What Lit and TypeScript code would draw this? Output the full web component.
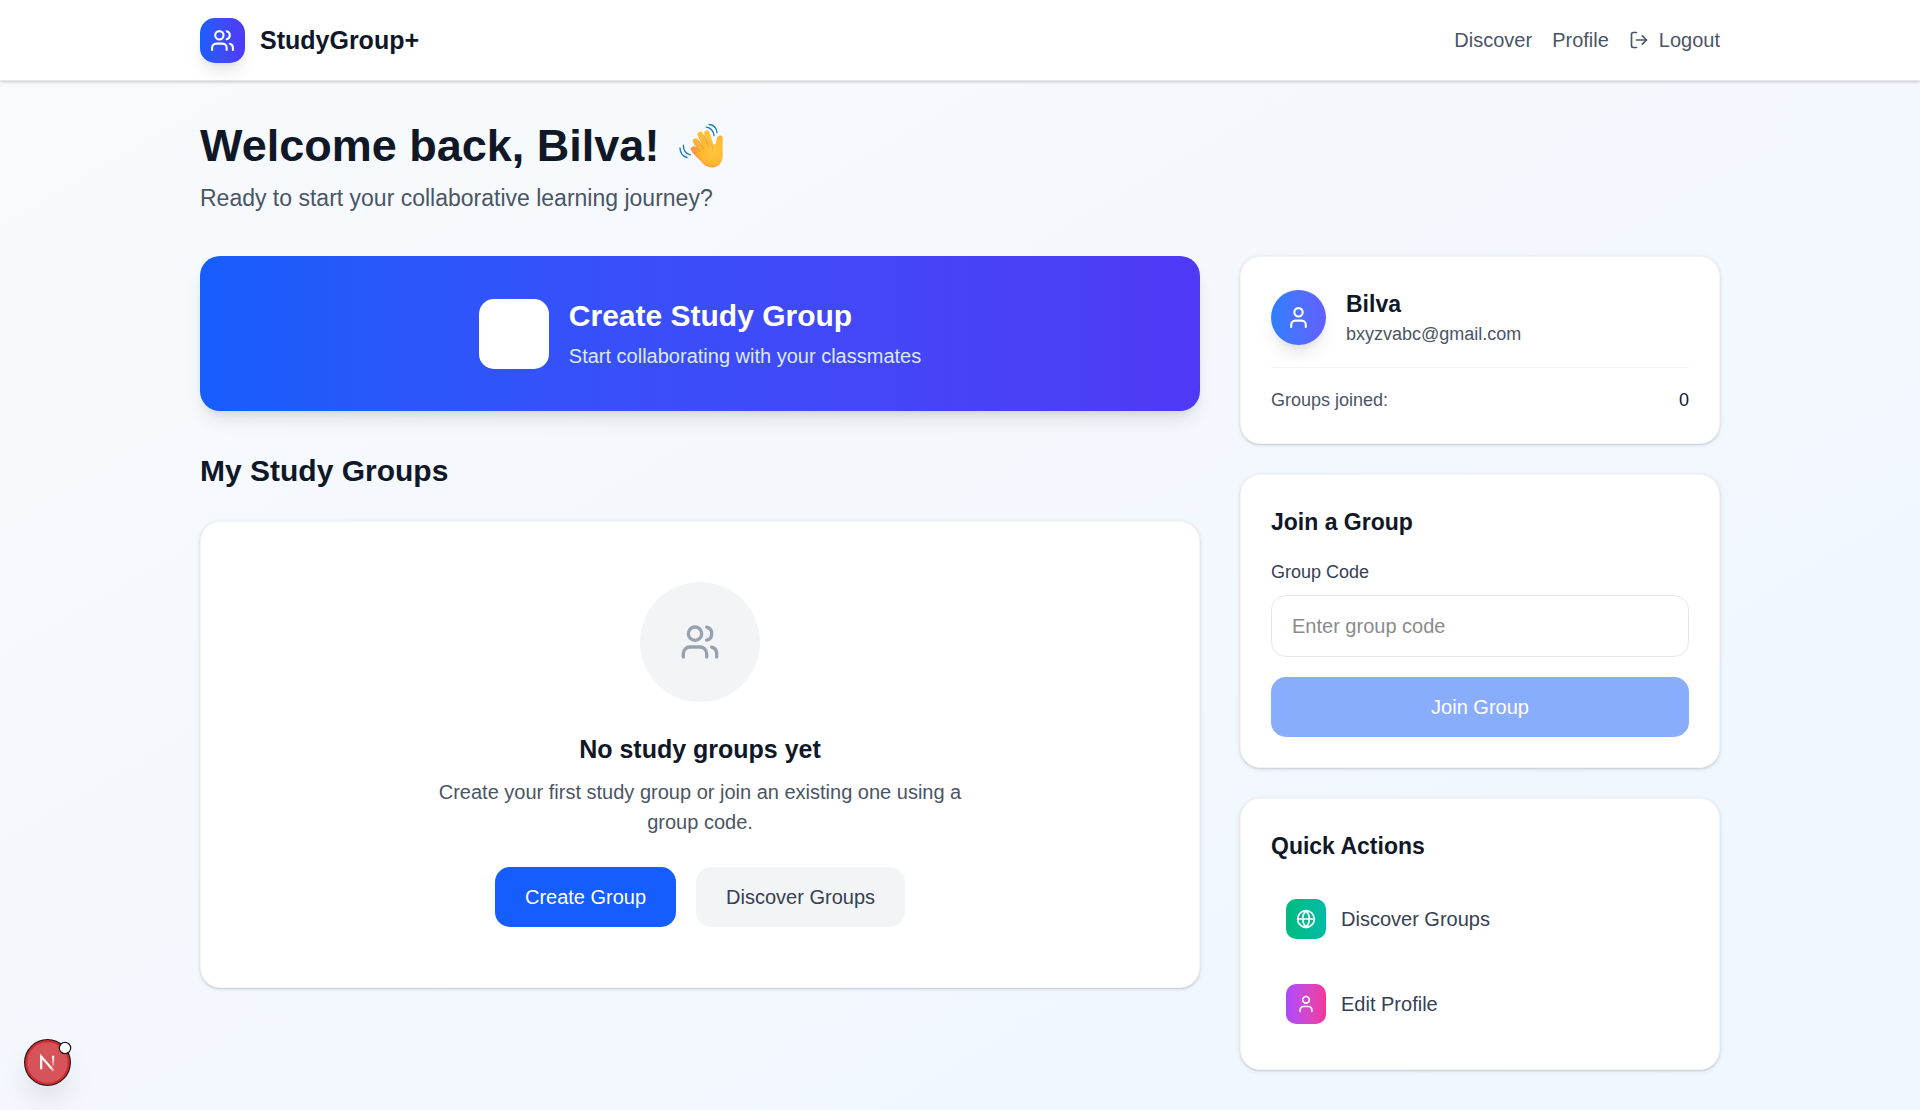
import { LitElement, html, css, svg, nothing } from "lit";
import { customElement, property, state } from "lit/decorators.js";

const ICONS = {
  users: svg`
    <path d="M16 21v-2a4 4 0 0 0-4-4H6a4 4 0 0 0-4 4v2"></path>
    <circle cx="9" cy="7" r="4"></circle>
    <path d="M22 21v-2a4 4 0 0 0-3-3.87"></path>
    <path d="M16 3.13a4 4 0 0 1 0 7.75"></path>`,
  user: svg`
    <path d="M19 21v-2a4 4 0 0 0-4-4H9a4 4 0 0 0-4 4v2"></path>
    <circle cx="12" cy="7" r="4"></circle>`,
  globe: svg`
    <circle cx="12" cy="12" r="10"></circle>
    <path d="M12 2a14.5 14.5 0 0 0 0 20 14.5 14.5 0 0 0 0-20"></path>
    <path d="M2 12h20"></path>`,
  logout: svg`
    <path d="M9 21H5a2 2 0 0 1-2-2V5a2 2 0 0 1 2-2h4"></path>
    <path d="m16 17 5-5-5-5"></path>
    <path d="M21 12H9"></path>`,
};

type IconName = keyof typeof ICONS;

@customElement("line-icon")
export class LineIcon extends LitElement {
  @property() name: IconName = "user";

  static styles = css`
    :host {
      display: inline-flex;
      width: 20px;
      height: 20px;
      flex: none;
    }
    svg {
      width: 100%;
      height: 100%;
      fill: none;
      stroke: currentColor;
      stroke-width: 2;
      stroke-linecap: round;
      stroke-linejoin: round;
    }
  `;

  render() {
    return html`<svg viewBox="0 0 24 24" aria-hidden="true">${ICONS[this.name] ?? nothing}</svg>`;
  }
}

@customElement("waving-hand")
export class WavingHand extends LitElement {
  static styles = css`
    :host {
      display: inline-flex;
      width: 44px;
      height: 45px;
    }
    svg {
      width: 100%;
      height: 100%;
    }
  `;

  render() {
    return html`
      <svg viewBox="57 40 132 134" role="img" aria-label="Waving hand">
        <defs>
          <linearGradient id="skin" gradientUnits="userSpaceOnUse" x1="150" y1="65" x2="96" y2="125">
            <stop offset="0" stop-color="#ffc83c"></stop>
            <stop offset="0.6" stop-color="#fdb535"></stop>
            <stop offset="1" stop-color="#f78f4c"></stop>
          </linearGradient>
          <radialGradient id="palm" gradientUnits="userSpaceOnUse" cx="160" cy="118" r="58">
            <stop offset="0" stop-color="#ffc83d"></stop>
            <stop offset="0.7" stop-color="#ffb82f"></stop>
            <stop offset="1" stop-color="#f5934a"></stop>
          </radialGradient>
        </defs>
        <g stroke="url(#skin)" stroke-width="17" stroke-linecap="round" fill="none">
          <path d="M101 115 L124 136"></path>
          <path d="M107 91 L132 130"></path>
          <path d="M121 71 L142 120"></path>
          <path d="M141 67 L154 112"></path>
        </g>
        <path
          d="M112 116 C122 104 140 98 158 101 C164 103 168 99 169 91 C170 81 173 74 180 74 C187 74 189 79 188 88 L188 137 C187 158 172 170 157 170 C142 170 133 164 124 153 L96 124 Z"
          fill="url(#palm)"
        ></path>
        <g stroke="#dd8420" stroke-width="2.5" stroke-linecap="round" fill="none" opacity="0.8">
          <path d="M106 108 L121 123"></path>
          <path d="M116 90 L131 114"></path>
          <path d="M132 74 L145 106"></path>
          <path d="M152 102 C162 106 160 115 156 121" opacity="0.6"></path>
        </g>
        <g stroke="#1878c8" stroke-width="4" stroke-linecap="round" fill="none">
          <path d="M147 41 C160 41 170 51 171 65"></path>
          <path d="M139 49 C151 50 161 60 162 74"></path>
          <path d="M70 103 C70 117 77 128 91 132"></path>
          <path d="M60 111 C60 125 67 136 81 140"></path>
        </g>
      </svg>
    `;
  }
}

@customElement("app-root")
export class AppRoot extends LitElement {
  @state() private code = "";

  private userName = "Bilva";
  private email = "bxyzvabc@gmail.com";
  private joined = 0;

  static styles = css`
    :host {
      display: block;
      min-height: 100vh;
      font-family: "Liberation Sans", Arial, sans-serif;
      font-size: 20px;
      line-height: 30px;
      color: #101828;
      background: linear-gradient(to bottom right in oklab, #f8fafc, #eff6ff);
    }
    * {
      box-sizing: border-box;
    }
    h1,
    h2,
    h3,
    p,
    dl,
    dd {
      margin: 0;
    }
    a {
      color: inherit;
      text-decoration: none;
    }
    button,
    input {
      font: inherit;
      border: 0;
      cursor: pointer;
    }
    .header {
      background: #ffffff;
      border-bottom: 1px solid #e5e7eb;
      box-shadow: 0 1px 4px rgb(0 0 0 / 0.1), 0 1px 2px rgb(0 0 0 / 0.1);
    }
    .wrap {
      max-width: 1600px;
      margin: 0 auto;
      padding: 0 40px;
    }
    .bar {
      display: flex;
      align-items: center;
      justify-content: space-between;
      min-height: 80px;
    }
    .brand {
      display: flex;
      align-items: center;
      gap: 15px;
      font-size: 25px;
      line-height: 35px;
      font-weight: 700;
    }
    .tile {
      display: flex;
      align-items: center;
      justify-content: center;
      flex: none;
      width: 40px;
      height: 40px;
      border-radius: 10px;
      color: #ffffff;
    }
    .tile-brand {
      width: 45px;
      height: 45px;
      border-radius: 15px;
      background: linear-gradient(to right in oklab, #155dfc, #4f39f6);
      box-shadow: 0 12px 18px -4px rgb(0 0 0 / 0.1), 0 5px 8px -5px rgb(0 0 0 / 0.1);
    }
    .tile-green {
      background: linear-gradient(to right in oklab, #00bc7d, #00bba7);
    }
    .tile-pink {
      background: linear-gradient(to right in oklab, #ad46ff, #f6339a);
    }
    .icon-md {
      width: 25px;
      height: 25px;
    }
    .icon-lg {
      width: 40px;
      height: 40px;
    }
    .nav {
      display: flex;
      align-items: center;
      gap: 20px;
      color: #4a5565;
    }
    .logout {
      display: flex;
      align-items: center;
      gap: 10px;
      padding: 0;
      color: inherit;
      background: none;
    }
    .main {
      padding-top: 40px;
      padding-bottom: 40px;
    }
    .title {
      display: flex;
      align-items: center;
      gap: 20px;
      font-size: 45px;
      line-height: 50px;
    }
    .lead {
      margin-top: 10px;
      font-size: 23px;
      line-height: 35px;
      color: #4a5565;
    }
    .columns {
      display: grid;
      grid-template-columns: repeat(3, minmax(0, 1fr));
      align-items: start;
      gap: 40px;
      margin-top: 40px;
    }
    .primary {
      grid-column: span 2;
    }
    .side {
      display: grid;
      gap: 30px;
    }
    .banner {
      display: flex;
      align-items: center;
      justify-content: center;
      gap: 20px;
      width: 100%;
      padding: 40px;
      border-radius: 20px;
      text-align: left;
      color: #ffffff;
      background: linear-gradient(to right in oklab, #155dfc, #4f39f6);
      box-shadow: 0 12px 18px -4px rgb(0 0 0 / 0.1), 0 5px 8px -5px rgb(0 0 0 / 0.1);
    }
    .banner-box {
      width: 70px;
      height: 70px;
      border-radius: 15px;
      background: #ffffff;
    }
    .banner-text {
      display: grid;
      gap: 5px;
    }
    .banner-title {
      font-size: 30px;
      line-height: 40px;
      font-weight: 700;
    }
    .banner-sub {
      color: #dbeafe;
    }
    .section-title {
      margin: 40px 0 30px;
      font-size: 30px;
      line-height: 40px;
    }
    .card {
      padding: 30px;
      border: 1px solid #f3f4f6;
      border-radius: 20px;
      background: #ffffff;
      box-shadow: 0 1px 4px rgb(0 0 0 / 0.1), 0 1px 2px rgb(0 0 0 / 0.1);
    }
    .empty {
      display: flex;
      flex-direction: column;
      align-items: center;
      padding: 60px;
      text-align: center;
    }
    .empty-icon {
      display: flex;
      align-items: center;
      justify-content: center;
      width: 120px;
      height: 120px;
      border-radius: 50%;
      color: #99a1af;
      background: #f3f4f6;
    }
    .empty-title {
      margin-top: 30px;
      font-size: 25px;
      line-height: 35px;
    }
    .empty-text {
      max-width: 560px;
      margin-top: 10px;
      color: #4a5565;
    }
    .actions {
      display: flex;
      gap: 20px;
      margin-top: 30px;
    }
    .button {
      padding: 15px 30px;
      border-radius: 15px;
      color: #ffffff;
      background: #155dfc;
    }
    .button-soft {
      color: #364153;
      background: #f3f4f6;
    }
    .button:disabled {
      opacity: 0.5;
      cursor: not-allowed;
    }
    .person {
      display: flex;
      align-items: center;
      gap: 20px;
    }
    .avatar {
      display: flex;
      align-items: center;
      justify-content: center;
      width: 55px;
      height: 55px;
      border-radius: 50%;
      color: #ffffff;
      background: linear-gradient(to right in oklab, #2b7fff, #615fff);
      box-shadow: 0 12px 18px -4px rgb(0 0 0 / 0.1), 0 5px 8px -5px rgb(0 0 0 / 0.1);
    }
    .card-title {
      font-size: 23px;
      line-height: 35px;
    }
    .small {
      font-size: 18px;
      line-height: 25px;
      color: #4a5565;
    }
    .stat {
      display: flex;
      justify-content: space-between;
      margin-top: 20px;
      padding-top: 20px;
      border-top: 1px solid #f3f4f6;
    }
    .stat-value {
      color: #101828;
    }
    .form {
      display: grid;
      gap: 20px;
      margin-top: 20px;
    }
    .field {
      display: grid;
      gap: 10px;
    }
    .label {
      color: #364153;
    }
    .input {
      width: 100%;
      height: 62px;
      padding: 15px 20px;
      border: 1px solid #e5e7eb;
      border-radius: 15px;
      color: #101828;
      background: #ffffff;
      cursor: text;
    }
    .input::placeholder {
      color: #8b8b8b;
      opacity: 1;
    }
    .links {
      display: grid;
      gap: 15px;
      margin-top: 20px;
    }
    .link {
      display: flex;
      align-items: center;
      gap: 15px;
      padding: 15px;
      border-radius: 15px;
      color: #364153;
    }
    .dev {
      position: fixed;
      left: 24px;
      bottom: 24px;
      width: 47px;
      height: 47px;
      padding: 0;
      border-radius: 50%;
      background: none;
      box-shadow: 0 16px 32px -8px rgb(0 0 0 / 0.18);
    }
    .dev-art {
      display: block;
      width: 47px;
      height: 47px;
      overflow: visible;
    }
  `;

  private onInput(e: Event) {
    this.code = (e.target as HTMLInputElement).value;
  }

  render() {
    return html`
      <header class="header">
        <div class="wrap bar">
          <a class="brand" href="#home">
            <span class="tile tile-brand"><line-icon class="icon-md" name="users"></line-icon></span>
            <span>StudyGroup+</span>
          </a>
          <nav class="nav">
            <a href="#discover">Discover</a>
            <a href="#profile">Profile</a>
            <button class="logout" type="button">
              <line-icon name="logout"></line-icon>
              <span>Logout</span>
            </button>
          </nav>
        </div>
      </header>

      <main class="wrap main">
        <h1 class="title"><span>Welcome back, ${this.userName}!</span><waving-hand></waving-hand></h1>
        <p class="lead">Ready to start your collaborative learning journey?</p>

        <div class="columns">
          <div class="primary">
            <button class="banner" type="button">
              <span class="banner-box"></span>
              <span class="banner-text">
                <span class="banner-title">Create Study Group</span>
                <span class="banner-sub">Start collaborating with your classmates</span>
              </span>
            </button>

            <h2 class="section-title">My Study Groups</h2>
            <section class="card empty">
              <div class="empty-icon"><line-icon class="icon-lg" name="users"></line-icon></div>
              <h3 class="empty-title">No study groups yet</h3>
              <p class="empty-text">
                Create your first study group or join an existing one using a group code.
              </p>
              <div class="actions">
                <button class="button" type="button">Create Group</button>
                <button class="button button-soft" type="button">Discover Groups</button>
              </div>
            </section>
          </div>

          <aside class="side">
            <section class="card">
              <div class="person">
                <span class="avatar"><line-icon class="icon-md" name="user"></line-icon></span>
                <div>
                  <h3 class="card-title">${this.userName}</h3>
                  <p class="small">${this.email}</p>
                </div>
              </div>
              <dl class="stat small">
                <dt>Groups joined:</dt>
                <dd class="stat-value">${this.joined}</dd>
              </dl>
            </section>

            <section class="card">
              <h3 class="card-title">Join a Group</h3>
              <form class="form" @submit=${(e: Event) => e.preventDefault()}>
                <div class="field">
                  <label class="small label" for="code">Group Code</label>
                  <input
                    class="input"
                    id="code"
                    type="text"
                    placeholder="Enter group code"
                    .value=${this.code}
                    @input=${this.onInput}
                  />
                </div>
                <button class="button" type="submit" ?disabled=${!this.code.trim()}>Join Group</button>
              </form>
            </section>

            <section class="card">
              <h3 class="card-title">Quick Actions</h3>
              <nav class="links">
                <a class="link" href="#discover">
                  <span class="tile tile-green"><line-icon name="globe"></line-icon></span>
                  <span>Discover Groups</span>
                </a>
                <a class="link" href="#profile">
                  <span class="tile tile-pink"><line-icon name="user"></line-icon></span>
                  <span>Edit Profile</span>
                </a>
              </nav>
            </section>
          </aside>
        </div>
      </main>

      <button class="dev" type="button" aria-label="Open developer tools">
        <svg class="dev-art" viewBox="0 0 47 47" aria-hidden="true">
          <defs>
            <linearGradient id="diag" gradientUnits="userSpaceOnUse" x1="24" y1="24" x2="31" y2="32">
              <stop offset="0" stop-color="#fff"></stop>
              <stop offset="0.5" stop-color="#fff"></stop>
              <stop offset="1" stop-color="#fff" stop-opacity="0.1"></stop>
            </linearGradient>
            <linearGradient id="stem" gradientUnits="userSpaceOnUse" x1="28" y1="17" x2="28" y2="28">
              <stop offset="0" stop-color="#fff"></stop>
              <stop offset="1" stop-color="#fff" stop-opacity="0.1"></stop>
            </linearGradient>
          </defs>
          <circle cx="23.5" cy="23.5" r="23.5" fill="#1c1718"></circle>
          <circle cx="23.5" cy="23.5" r="22.4" fill="#ce2c31"></circle>
          <circle cx="23.5" cy="23.5" r="20.2" fill="#d65459"></circle>
          <path d="M17.2 30.2V17.6L29.8 32" fill="none" stroke="url(#diag)" stroke-width="2.2"></path>
          <rect x="28" y="16.8" width="2.2" height="11" fill="url(#stem)"></rect>
          <circle cx="41" cy="9" r="5.7" fill="#fff" stroke="#1c1718" stroke-width="1.2"></circle>
        </svg>
      </button>
    `;
  }
}
